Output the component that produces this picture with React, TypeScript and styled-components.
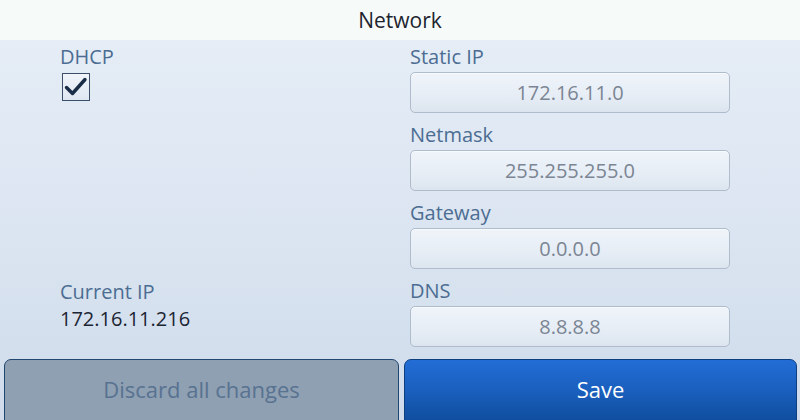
import React from "react";
import styled, { createGlobalStyle } from "styled-components";

const Global = createGlobalStyle`
  html, body { margin: 0; padding: 0; }
  body { width: 800px; height: 420px; overflow: hidden; font-family: "Open Sans", "Noto Sans", sans-serif; }
`;

const Screen = styled.div`
  width: 800px;
  height: 420px;
  display: flex;
  flex-direction: column;
  background: linear-gradient(180deg, #e7eef7 0%, #dbe5f1 55%, #cfdbeb 100%);
`;

const Header = styled.div`
  height: 40px;
  flex: none;
  display: flex;
  align-items: center;
  justify-content: center;
  background: #f6fbf9;
  color: #1c2430;
  font-size: 21px;
`;

const Body = styled.div`
  flex: 1;
  display: grid;
  grid-template-columns: 350px 320px;
  padding: 5px 0 0 60px;
`;

const LeftCol = styled.div`
  display: flex;
  flex-direction: column;
  justify-content: space-between;
  padding-bottom: 29px;
`;

const RightCol = styled.div`
  display: flex;
  flex-direction: column;
  gap: 10px;
`;

const Field = styled.div`
  display: flex;
  flex-direction: column;
  gap: 4px;
`;

const Label = styled.div`
  color: #4c6d92;
  font-size: 20px;
  line-height: 23px;
`;

const Value = styled.div`
  color: #1b2533;
  font-size: 20px;
  line-height: 23px;
`;

const Input = styled.div`
  box-sizing: border-box;
  width: 320px;
  height: 41px;
  border: 1px solid #aebccc;
  border-radius: 5px;
  background: linear-gradient(180deg, #eff4fa 0%, #e6edf5 60%, #dce5ef 100%);
  box-shadow: inset 0 1px 0 #f8fbfe;
  display: flex;
  align-items: center;
  justify-content: center;
  color: #7b8593;
  font-size: 20px;
`;

const CheckBox = styled.div`
  box-sizing: border-box;
  width: 28px;
  height: 28px;
  margin-left: 2px;
  margin-top: 1px;
  border: 1px solid #3b4f68;
  background: linear-gradient(180deg, #f1f5fa 0%, #dfe7f1 100%);
  display: flex;
  align-items: center;
  justify-content: center;
`;

const Footer = styled.div`
  height: 61px;
  flex: none;
  display: grid;
  grid-template-columns: 395px 393px;
  gap: 5px;
  padding: 0 3px 0 4px;
`;

const Button = styled.div<{ $primary?: boolean }>`
  box-sizing: border-box;
  height: 64px;
  border: 1px solid ${(p) => (p.$primary ? "#0d3f80" : "#21466f")};
  border-radius: 7px 7px 0 0;
  background: ${(p) =>
    p.$primary
      ? "linear-gradient(180deg, #226dd6 0%, #1a5fbd 50%, #0f4d9d 100%)"
      : "#8fa0b3"};
  color: ${(p) => (p.$primary ? "#ffffff" : "#587290")};
  font-size: 22px;
  display: flex;
  align-items: center;
  justify-content: center;
  padding-bottom: 4px;
`;

const Check = () => (
  <svg width="24" height="22" viewBox="0 0 24 22">
    <path d="M2.5 11.5 L8.5 17.5 L21 3.5" fill="none" stroke="#1a2d47" strokeWidth="3.4" strokeLinecap="round" strokeLinejoin="round" />
  </svg>
);

const fields = [
  { label: "Static IP", value: "172.16.11.0" },
  { label: "Netmask", value: "255.255.255.0" },
  { label: "Gateway", value: "0.0.0.0" },
  { label: "DNS", value: "8.8.8.8" },
];

export default function App() {
  return (
    <>
      <Global />
      <Screen>
        <Header>Network</Header>
        <Body>
          <LeftCol>
            <Field>
              <Label>DHCP</Label>
              <CheckBox>
                <Check />
              </CheckBox>
            </Field>
            <Field>
              <Label>Current IP</Label>
              <Value>172.16.11.216</Value>
            </Field>
          </LeftCol>
          <RightCol>
            {fields.map((f) => (
              <Field key={f.label}>
                <Label>{f.label}</Label>
                <Input>{f.value}</Input>
              </Field>
            ))}
          </RightCol>
        </Body>
        <Footer>
          <Button>Discard all changes</Button>
          <Button $primary>Save</Button>
        </Footer>
      </Screen>
    </>
  );
}
